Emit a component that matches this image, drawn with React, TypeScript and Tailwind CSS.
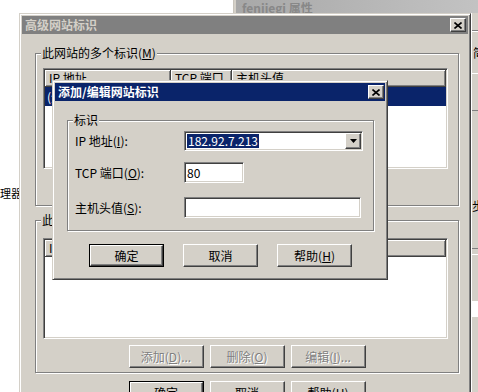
import React from 'react';

// classic win2000 bevels
const raised =
  'bg-[#d4d0c8] border border-t-white border-l-white border-r-[#404040] border-b-[#404040] shadow-[inset_-1px_-1px_0_#808080]';
const sunken =
  'bg-white border border-t-[#808080] border-l-[#808080] border-r-white border-b-white shadow-[inset_1px_1px_0_#404040,inset_-1px_-1px_0_#d4d0c8]';
const frame =
  'bg-[#d4d0c8] border border-t-[#d4d0c8] border-l-[#d4d0c8] border-r-[#404040] border-b-[#404040] shadow-[inset_1px_1px_0_#fff,inset_-1px_-1px_0_#808080] p-[2px]';

type Kids = { children?: React.ReactNode };

const Button = ({ children, primary, disabled }: Kids & { primary?: boolean; disabled?: boolean }) => {
  const label = (
    <span className={`leading-[14px] whitespace-nowrap ${disabled ? 'text-[#808080] [text-shadow:1px_1px_0_#fff]' : ''}`}>
      {children}
    </span>
  );
  if (primary) {
    return (
      <div className="w-[75px] h-[23px] border border-black shrink-0">
        <div className={`${raised} w-full h-full flex items-center justify-center`}>{label}</div>
      </div>
    );
  }
  return <div className={`${raised} w-[75px] h-[23px] shrink-0 flex items-center justify-center`}>{label}</div>;
};

const CloseButton = () => (
  <div className={`${raised} w-[16px] h-[14px] flex items-center justify-center`}>
    <svg width="8" height="7" viewBox="0 0 8 7">
      <path d="M0.5 0.5 L7.5 6.5 M7.5 0.5 L0.5 6.5" stroke="#000" strokeWidth="1.6" />
    </svg>
  </div>
);

const GroupBox = ({ label, className, children }: Kids & { label: React.ReactNode; className: string }) => (
  <div className={`relative border border-[#808080] shadow-[inset_1px_1px_0_#fff,1px_1px_0_#fff] ${className}`}>
    <span className="absolute left-[5px] -top-[8px] bg-[#d4d0c8] px-[1px] leading-[14px] whitespace-nowrap">{label}</span>
    {children}
  </div>
);

const HeadCell = ({ className, children }: Kids & { className: string }) => (
  <div
    className={`h-full flex items-center pl-[4px] bg-[#d4d0c8] border-r border-b border-[#404040] shadow-[inset_1px_1px_0_#fff,inset_-1px_-1px_0_#808080] whitespace-nowrap overflow-hidden ${className}`}
  >
    {children}
  </div>
);

const ListView = ({ cols, row }: { cols: string[]; row?: string[] }) => (
  <div className={`${sunken} w-[405px] h-[101px] p-[1px] overflow-hidden`}>
    <div className="flex h-[17px] leading-[14px]">
      <HeadCell className="w-[126px]">{cols[0]}</HeadCell>
      <HeadCell className="w-[61px]">{cols[1]}</HeadCell>
      <HeadCell className="flex-1">{cols[2]}</HeadCell>
    </div>
    {row && (
      <div className="flex h-[19px] items-center bg-[#0a246a] text-white leading-[14px] whitespace-nowrap">
        <span className="w-[126px] pl-[2px]">{row[0]}</span>
        <span className="w-[61px] pl-[4px]">{row[1]}</span>
        <span className="flex-1">{row[2]}</span>
      </div>
    )}
  </div>
);

export default function App() {
  return (
    <div className="relative w-[478px] h-[392px] overflow-hidden bg-white text-[12px] text-black font-['Noto_Sans_CJK_SC','Noto_Sans',sans-serif]">
      {/* partly hidden window behind */}
      <div className="absolute left-[233px] top-0 w-[260px] h-[392px] bg-[#d4d0c8] border-l border-l-[#c8c4bc]">
        <div className="ml-[2px] h-[13px] bg-gradient-to-r from-[#a8a8a8] to-[#c4c4c4] flex items-end pl-[6px] overflow-hidden">
          <span className="font-bold text-[#888888] leading-[13px] translate-y-[1px]">fenjiegi 属性</span>
        </div>
        <div className="ml-[237px] h-[379px] border-l border-l-white flex flex-col overflow-hidden">
          <div className="mt-[17px] h-[1px] bg-[#808080]" />
          <div className="h-[1px] bg-white" />
          <span className="mt-[14px] leading-[14px] pl-[1px] whitespace-nowrap">简</span>
          <div className="mt-[13px] h-[1px] bg-white" />
          <div className="mt-[36px] h-[1px] bg-[#808080]" />
          <span className="mt-[88px] leading-[14px] whitespace-nowrap">步</span>
          <div className="mt-[35px] h-[1px] bg-[#808080]" />
          <div className="mt-[5px] h-[1px] bg-white" />
          <div className="mt-[46px] h-[16px] bg-white" />
        </div>
      </div>

      <span className="absolute left-0 top-[186px] text-[11px] leading-[14px]">理器</span>

      {/* 高级网站标识 */}
      <div className={`${frame} absolute left-[19px] top-[13px] w-[452px] h-[400px] flex flex-col`}>
        <div className="h-[18px] shrink-0 bg-[#808080] flex items-center justify-between pl-[3px] pr-[2px]">
          <span className="font-bold text-[#d4d0c8] leading-[14px]">高级网站标识</span>
          <CloseButton />
        </div>
        <div className="flex flex-col items-start pl-[13px]">
          <GroupBox
            className="mt-[19px] w-[424px] h-[153px]"
            label={
              <>
                此网站的多个标识(<u>M</u>)
              </>
            }
          >
            <div className="pl-[7px] pt-[14px]">
              <ListView cols={['IP 地址', 'TCP 端口', '主机头值']} row={['(全部未分配)', '80', '']} />
            </div>
            <div className="flex justify-center gap-[6px] mt-[7px]">
              <Button>添加(<u>A</u>)...</Button>
              <Button>删除(<u>R</u>)</Button>
              <Button>编辑(<u>E</u>)...</Button>
            </div>
          </GroupBox>

          <GroupBox
            className="mt-[14px] w-[424px] h-[153px]"
            label={
              <>
                此网站的 SSL 标识(<u>S</u>)
              </>
            }
          >
            <div className="pl-[7px] pt-[17px]">
              <ListView cols={['IP 地址', 'SSL 端口', '']} />
            </div>
            <div className="flex justify-center gap-[6px] mt-[6px]">
              <Button disabled>添加(<u>D</u>)...</Button>
              <Button disabled>删除(<u>O</u>)</Button>
              <Button disabled>编辑(<u>I</u>)...</Button>
            </div>
          </GroupBox>

          <div className="w-[424px] mt-[8px] flex justify-center gap-[6px]">
            <Button primary>确定</Button>
            <Button>取消</Button>
            <Button>帮助(<u>H</u>)</Button>
          </div>
        </div>
      </div>

      {/* 添加/编辑网站标识 */}
      <div className={`${frame} absolute left-[52px] top-[80px] w-[336px] h-[200px] flex flex-col`}>
        <div className="h-[18px] shrink-0 bg-[#0a246a] flex items-center justify-between pl-[3px] pr-[1px]">
          <span className="font-bold text-white leading-[14px]">添加/编辑网站标识</span>
          <CloseButton />
        </div>
        <div className="pl-[12px]">
          <GroupBox className="mt-[19px] w-[307px] h-[111px] pt-[10px] pl-[7px]" label="标识">
            <div className="flex items-center h-[20px]">
              <span className="w-[109px] leading-[14px]">
                IP 地址(<u>I</u>):
              </span>
              <div className={`${sunken} w-[179px] h-[20px] p-[1px] flex items-center`}>
                <div className="flex-1 pl-[1px] flex items-center">
                  <span className="bg-[#0a246a] text-white leading-[14px] px-[1px]">182.92.7.213</span>
                </div>
                <div className={`${raised} w-[16px] h-full flex items-center justify-center`}>
                  <svg width="7" height="4" viewBox="0 0 7 4">
                    <polygon points="0,0 7,0 3.5,4" fill="#000" />
                  </svg>
                </div>
              </div>
            </div>
            <div className="flex items-center h-[21px] mt-[11px]">
              <span className="w-[109px] leading-[14px]">
                TCP 端口(<u>O</u>):
              </span>
              <div className={`${sunken} w-[60px] h-[21px] flex items-center pl-[2px] leading-[14px]`}>80</div>
            </div>
            <div className="flex items-center h-[21px] mt-[14px]">
              <span className="w-[109px] leading-[14px]">
                主机头值(<u>S</u>):
              </span>
              <div className={`${sunken} w-[177px] h-[21px]`} />
            </div>
          </GroupBox>
          <div className="w-[307px] mt-[13px] flex justify-center gap-[19px]">
            <Button primary>确定</Button>
            <Button>取消</Button>
            <Button>帮助(<u>H</u>)</Button>
          </div>
        </div>
      </div>
    </div>
  );
}
